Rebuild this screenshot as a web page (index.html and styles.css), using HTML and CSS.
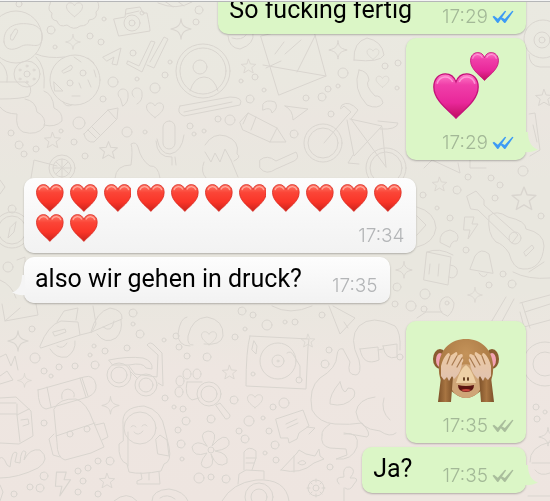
FILE: index.html
```
<!DOCTYPE html>
<html lang="de">
<head>
    <meta charset="UTF-8">
    <meta name="viewport" content="width=device-width, initial-scale=1.0">
    <title>Chat</title>
    <link rel="stylesheet" href="styles.css">
</head>
<body>

    <!-- Shared shapes -->
    <svg class="defs" aria-hidden="true">
        <defs>
            <linearGradient id="red" x1="0" y1="0" x2="0" y2="1">
                <stop offset="0" stop-color="#ff7a6a"/>
                <stop offset="0.3" stop-color="#fb4537"/>
                <stop offset="0.65" stop-color="#fa3528"/>
                <stop offset="1" stop-color="#c9231c"/>
            </linearGradient>
            <linearGradient id="pink" x1="0" y1="0" x2="0" y2="1">
                <stop offset="0" stop-color="#ff7cc8"/>
                <stop offset="0.25" stop-color="#f03fa9"/>
                <stop offset="0.65" stop-color="#e9279a"/>
                <stop offset="1" stop-color="#c00f60"/>
            </linearGradient>
            <radialGradient id="fur" cx="0.5" cy="0.25" r="0.75">
                <stop offset="0" stop-color="#c4935a"/>
                <stop offset="0.6" stop-color="#ad7c46"/>
                <stop offset="1" stop-color="#8a5c30"/>
            </radialGradient>
            <linearGradient id="arm" x1="0" y1="0" x2="1" y2="0">
                <stop offset="0" stop-color="#7d5129"/>
                <stop offset="0.5" stop-color="#a87542"/>
                <stop offset="1" stop-color="#7d5129"/>
            </linearGradient>
            <linearGradient id="hand" x1="0" y1="0" x2="0" y2="1">
                <stop offset="0" stop-color="#ecc9a2"/>
                <stop offset="1" stop-color="#e0c2b0"/>
            </linearGradient>
            <symbol id="heart" viewBox="0 0 28 28">
                <path d="M14 27.5C11.500 24 0.500 17.500 0.500 8.500C0.500 3.500 3.800 0.500 7.500 0.500C10.800 0.500 13 2.600 14 5.400C15 2.600 17.200 0.500 20.500 0.500C24.200 0.500 27.500 3.500 27.500 8.500C27.500 17.500 16.500 24 14 27.500Z" fill="url(#red)" stroke="#d8281f" stroke-width="0.8"/>
                <path d="M3 6C4 2 10 0.800 12 5.500M16 5.500C18 0.800 24 2 25 6" fill="none" stroke="#ffb5a8" stroke-width="1.200" opacity="0.8"/>
            </symbol>
            <symbol id="pink-heart" viewBox="0 0 28 28">
                <path d="M14 27.500C11.500 24 0.500 17.500 0.500 8.500C0.500 3.500 3.800 0.500 7.500 0.500C10.800 0.500 13 2.600 14 5.400C15 2.600 17.200 0.500 20.500 0.500C24.200 0.500 27.500 3.500 27.500 8.500C27.500 17.500 16.500 24 14 27.500Z" fill="url(#pink)" stroke="#c41279" stroke-width="0.8"/>
                <path d="M2.500 6.500C4 1.500 10 1 12 5.500M16 5.500C18 1 24 1.500 25.500 6.500" fill="none" stroke="#ffb0e0" stroke-width="1" opacity="0.7"/>
            </symbol>
            <symbol id="ticks" viewBox="0 0 22 14">
                <path d="M0.500 6.800L2 5.800L5.800 8.700L13 0.800L14.200 1.300L6.500 12.800L5.300 12.900Z"/>
                <path d="M8.500 8.800L10 7.600L12.800 8.900L20.300 0.800L21.500 1.300L13.500 12.800L12.300 12.900Z"/>
            </symbol>
            <symbol id="tail" viewBox="0 0 14 26">
                <path d="M0 0H3C3 9 6 15 13 17.500C9 19.500 4 20.500 0 20Z"/>
            </symbol>
            <symbol id="star" viewBox="0 0 20 20">
                <path d="M10 1.500L12.200 7L18.500 7.500L13.800 11.300L15.500 17.500L10 14.200L4.500 17.500L6.200 11.300L1.500 7.500L7.800 7Z"/>
            </symbol>
            <symbol id="spark" viewBox="0 0 20 20">
                <path d="M10 0.800C10.500 6 12 8.500 19.200 10C12 11.500 10.500 14 10 19.200C9.500 14 8 11.500 0.800 10C8 8.500 9.500 6 10 0.800Z"/>
            </symbol>
            <symbol id="love" viewBox="0 0 20 18">
                <path d="M10 16.500C6 13.500 1.500 10 1.500 6C1.500 1 8 0.500 10 5C12 0.500 18.500 1 18.500 6C18.500 10 14 13.500 10 16.500Z"/>
            </symbol>
            <symbol id="bolt" viewBox="0 0 16 24">
                <path d="M2 1H11L9 8H15L5 23L7 14H1Z"/>
            </symbol>
        </defs>
    </svg>

    <!-- Doodle wallpaper -->
    <svg class="wallpaper" viewBox="0 0 550 501" preserveAspectRatio="xMidYMid slice" aria-hidden="true">
        <!-- bubbles -->
        <g>
            <circle cx="19" cy="4" r="3"/><circle cx="51" cy="30" r="4"/><circle cx="90" cy="36" r="3"/><circle cx="101" cy="42" r="3"/>
            <circle cx="55" cy="47" r="2"/><circle cx="113" cy="82" r="5"/><circle cx="133" cy="53" r="3"/><circle cx="137" cy="79" r="2"/>
            <circle cx="155" cy="88" r="5"/><circle cx="165" cy="75" r="3"/><circle cx="103" cy="99" r="3"/><circle cx="79" cy="123" r="6"/>
            <circle cx="127" cy="132" r="5"/><circle cx="145" cy="132" r="2"/><circle cx="190" cy="126" r="3"/><circle cx="194" cy="134" r="2"/>
            <circle cx="204" cy="131" r="2"/><circle cx="74" cy="142" r="3"/><circle cx="85" cy="156" r="3"/><circle cx="19" cy="145" r="4"/>
            <circle cx="24" cy="154" r="3"/><circle cx="36" cy="149" r="3"/><circle cx="11" cy="133" r="3"/><circle cx="61" cy="131" r="2"/>
            <circle cx="199" cy="10" r="4"/><circle cx="196" cy="22" r="3"/><circle cx="104" cy="19" r="2"/><circle cx="170" cy="62" r="2"/>
            <circle cx="241" cy="81" r="2"/><circle cx="255" cy="77" r="3"/><circle cx="250" cy="99" r="4"/><circle cx="264" cy="90" r="2"/>
            <circle cx="343" cy="73" r="5"/><circle cx="328" cy="89" r="3"/><circle cx="306" cy="98" r="3"/><circle cx="322" cy="97" r="4"/>
            <circle cx="338" cy="86" r="2"/><circle cx="385" cy="66" r="3"/><circle cx="398" cy="63" r="3"/><circle cx="397" cy="88" r="2"/>
            <circle cx="331" cy="114" r="3"/><circle cx="230" cy="120" r="5"/><circle cx="218" cy="119" r="3"/><circle cx="294" cy="134" r="4"/>
            <circle cx="523" cy="171" r="5"/><circle cx="491" cy="178" r="3"/><circle cx="500" cy="185" r="3"/><circle cx="468" cy="177" r="3"/>
            <circle cx="457" cy="190" r="4"/><circle cx="423" cy="195" r="3"/><circle cx="437" cy="208" r="2"/><circle cx="495" cy="198" r="3"/>
            <circle cx="541" cy="216" r="3"/><circle cx="450" cy="218" r="3"/><circle cx="466" cy="250" r="3"/><circle cx="503" cy="274" r="3"/>
            <circle cx="489" cy="285" r="3"/><circle cx="512" cy="284" r="4"/><circle cx="425" cy="294" r="5"/><circle cx="397" cy="287" r="4"/>
            <circle cx="395" cy="304" r="3"/><circle cx="411" cy="306" r="5"/><circle cx="424" cy="309" r="3"/><circle cx="32" cy="329" r="3"/>
            <circle cx="35" cy="358" r="5"/><circle cx="44" cy="371" r="3"/><circle cx="51" cy="376" r="2"/><circle cx="59" cy="367" r="3"/>
            <circle cx="75" cy="366" r="3"/><circle cx="90" cy="355" r="2"/><circle cx="105" cy="351" r="3"/><circle cx="94" cy="346" r="2"/>
            <circle cx="95" cy="365" r="4"/><circle cx="127" cy="348" r="3"/><circle cx="133" cy="313" r="4"/><circle cx="140" cy="334" r="4"/>
            <circle cx="133" cy="324" r="2"/><circle cx="164" cy="340" r="2"/><circle cx="176" cy="336" r="3"/><circle cx="179" cy="347" r="3"/>
            <circle cx="187" cy="356" r="3"/><circle cx="165" cy="398" r="3"/><circle cx="174" cy="407" r="2"/><circle cx="183" cy="409" r="3"/>
            <circle cx="186" cy="421" r="4"/><circle cx="178" cy="430" r="3"/><circle cx="181" cy="444" r="4"/><circle cx="182" cy="459" r="2"/>
            <circle cx="44" cy="423" r="3"/><circle cx="98" cy="461" r="3"/><circle cx="110" cy="461" r="4"/><circle cx="88" cy="468" r="3"/>
            <circle cx="78" cy="471" r="3"/><circle cx="83" cy="481" r="3"/><circle cx="98" cy="494" r="3"/><circle cx="78" cy="492" r="3"/>
            <circle cx="44" cy="476" r="4"/><circle cx="30" cy="487" r="3"/><circle cx="40" cy="488" r="4"/><circle cx="14" cy="494" r="3"/>
            <circle cx="242" cy="311" r="4"/><circle cx="253" cy="315" r="3"/><circle cx="267" cy="325" r="5"/><circle cx="285" cy="322" r="2"/>
            <circle cx="295" cy="322" r="3"/><circle cx="245" cy="329" r="2"/><circle cx="235" cy="337" r="3"/><circle cx="207" cy="357" r="4"/>
            <circle cx="322" cy="315" r="3"/><circle cx="325" cy="364" r="4"/><circle cx="329" cy="350" r="3"/><circle cx="284" cy="403" r="5"/>
            <circle cx="273" cy="407" r="3"/><circle cx="234" cy="400" r="4"/><circle cx="249" cy="421" r="5"/><circle cx="263" cy="418" r="2"/>
            <circle cx="239" cy="431" r="3"/><circle cx="245" cy="439" r="4"/><circle cx="269" cy="431" r="3"/><circle cx="275" cy="445" r="4"/>
            <circle cx="265" cy="453" r="2"/><circle cx="276" cy="460" r="3"/><circle cx="330" cy="467" r="3"/><circle cx="199" cy="478" r="5"/>
            <circle cx="211" cy="477" r="3"/><circle cx="226" cy="479" r="4"/><circle cx="211" cy="419" r="4"/><circle cx="536" cy="407" r="3"/>
            <circle cx="545" cy="412" r="2"/><circle cx="537" cy="419" r="3"/><circle cx="8" cy="267" r="5"/><circle cx="400" cy="357" r="3"/>
        </g>

        <!-- small shapes -->
        <g>
            <use href="#spark" x="65" y="34" width="16" height="16"/>
            <use href="#spark" x="170" y="18" width="22" height="22"/>
            <use href="#spark" x="328" y="40" width="20" height="20"/>
            <use href="#spark" x="395" y="261" width="18" height="18"/>
            <use href="#spark" x="467" y="287" width="16" height="16"/>
            <use href="#spark" x="7" y="330" width="22" height="22"/>
            <use href="#spark" x="17" y="373" width="15" height="15"/>
            <use href="#spark" x="101" y="396" width="19" height="19"/>
            <use href="#spark" x="538" y="427" width="20" height="20"/>
            <use href="#star" x="43" y="131" width="19" height="19"/>
            <use href="#star" x="98" y="140" width="21" height="21"/>
            <use href="#star" x="240" y="58" width="17" height="17"/>
            <use href="#star" x="431" y="176" width="17" height="17"/>
            <use href="#star" x="510" y="185" width="28" height="28"/>
            <use href="#star" x="534" y="88" width="20" height="20"/>
            <use href="#star" x="221" y="364" width="17" height="17"/>
            <use href="#star" x="300" y="333" width="16" height="16"/>
            <use href="#star" x="98" y="472" width="18" height="18"/>
            <use href="#love" x="145" y="101" width="20" height="18"/>
            <use href="#love" x="65" y="1" width="19" height="17"/>
            <use href="#love" x="366" y="47" width="14" height="14"/>
            <use href="#love" x="375" y="74" width="15" height="15"/>
            <use href="#love" x="246" y="393" width="18" height="16"/>
            <use href="#love" x="200" y="330" width="18" height="16"/>
            <use href="#bolt" x="462" y="216" width="18" height="24"/>
            <use href="#bolt" x="54" y="471" width="18" height="26"/>
        </g>

        <!-- astronaut helmet, cookies, cloud -->
        <circle cx="16" cy="37" r="26"/>
        <path d="M4 42C3 28 14 22 29 24C40 25 44 33 42 40C39 51 29 41 20 47C12 51 5 50 4 42ZM11 35L15 29Q19 29 17 33L13 40Q9 41 11 35Z"/>
        <circle cx="27" cy="74" r="13"/><circle cx="27" cy="74" r="3"/>
        <circle cx="27" cy="66" r="1"/><circle cx="34" cy="70" r="1"/><circle cx="34" cy="79" r="1"/><circle cx="27" cy="82" r="1"/><circle cx="20" cy="79" r="1"/><circle cx="20" cy="70" r="1"/>
        <path d="M36 54Q47 59 65 57M36 57Q46 66 44 88M0 62Q9 70 7 82M0 82H25Q34 87 29 96Q22 99 0 99"/>
        <path d="M25 99Q36 101 37 112Q47 117 44 127Q37 136 23 132Q15 128 17 114Q5 114 0 107M44 91Q53 94 54 108Q63 112 62 121Q55 128 44 125"/>
        <path d="M50 4Q47 10 52 13Q50 20 57 21Q59 28 67 25Q74 31 80 26Q88 26 89 20Q98 19 96 12Q101 8 97 0M50 4L51 0"/>
        <circle cx="75" cy="80" r="25"/><circle cx="70" cy="83" r="3"/><circle cx="83" cy="73" r="3"/>
        <path d="M62 71L71 65Q74 67 71 70L64 73ZM54 82L63 91H55ZM79 83L81 88M88 80L91 87M72 96H80M74 57L81 62M88 58L94 63M94 70L96 77M63 102Q66 108 72 105"/>

        <!-- camera, plane, ticks, profile -->
        <path d="M114 19L125 17L126 9L140 7L143 13L147 13Q150 27 150 31L119 36ZM126 14L139 11"/>
        <circle cx="132" cy="23" r="8"/><circle cx="132" cy="23" r="3"/><circle cx="142" cy="13" r="2"/>
        <path d="M103 57L121 48L117 65L112 64L114 57L107 61Z"/>
        <path d="M128 61L139 66L151 41L155 42L142 72L127 64ZM150 62L164 37L168 39L154 68L147 65"/>
        <circle cx="203" cy="71" r="27"/><circle cx="203" cy="71" r="23"/><circle cx="200" cy="67" r="7"/><path d="M190 91Q194 77 204 77Q214 77 218 91"/>
        <path d="M158 3Q177 11 192 2M163 0L173 7M176 0L184 6M120 98a5 5 0 1 1 8 -4Q129 102 123 106ZM134 97a5 5 0 1 1 8 -4Q143 101 137 104"/>

        <!-- crayon, mic, thumb, citrus, bracelet -->
        <path d="M84 134L108 110L118 108L117 119L94 142Q86 143 84 134ZM108 110L116 119M92 127L100 135M88 130L96 138"/>
        <rect x="163" y="121" width="12" height="28" rx="6"/><path d="M157 139Q160 154 170 154Q182 152 184 135M156 141Q157 158 172 157V165M175 157L176 165"/>
        <path d="M115 178Q116 165 131 165Q133 150 131 144Q136 141 138 147Q141 160 150 166Q158 165 160 178M31 178L34 160L57 166"/>
        <circle cx="62" cy="168" r="13"/><circle cx="62" cy="168" r="9"/><path d="M62 159V177M53 168H71M56 162L69 174M56 174L68 162"/>
        <path d="M180 106L230 97Q244 97 240 105L184 116Q176 113 180 106ZM184 112L232 102"/>

        <!-- envelope, phone, faces -->
        <path d="M261 36L312 24L326 76L279 95ZM263 65L297 71L326 76M275 54L284 42M285 54L301 40M297 72L315 36M266 68L281 61"/>
        <path d="M228 36Q229 48 240 49Q255 44 253 33M232 38Q242 41 246 35"/>
        <path d="M354 60Q353 42 367 38Q382 41 384 55Q380 63 354 60ZM359 70Q352 89 367 105Q378 110 383 103Q381 95 375 96Q364 85 369 80Q368 71 359 70Z"/>
        <path d="M263 104Q266 99 275 102Q279 108 272 113Q271 106 263 110ZM285 106L308 109L293 120Q293 110 285 106Z"/>

        <!-- bicycle, pencil, monkey, tools -->
        <circle cx="323" cy="143" r="19"/><circle cx="323" cy="143" r="15"/><circle cx="386" cy="168" r="20"/><circle cx="386" cy="168" r="16"/>
        <path d="M324 143L347 116L351 112L344 106Q338 112 342 105Q349 100 358 110L351 119L386 167M350 119L382 126L354 156L347 120M378 121L398 123Q397 130 380 129M353 155L348 163L359 164M382 127L386 167"/>
        <path d="M240 122L248 113L277 128L286 142L270 142L243 130ZM248 113L243 124M256 117L251 130M277 128L270 142"/>
        <path d="M205 145Q213 132 226 136Q240 141 237 154Q242 157 234 161M205 152L211 162L215 153L220 162L225 149L231 160M204 162Q200 172 206 178M231 160L238 177M260 160Q267 154 276 161L296 152Q300 158 294 161L276 169Q266 176 260 168Z"/>

        <!-- right edge -->
        <circle cx="543" cy="39" r="19"/><circle cx="542" cy="40" r="8"/><circle cx="542" cy="40" r="3"/>
        <path d="M529 54Q529 66 540 67H550M529 114L535 113L540 150L530 156M424 168L432 160L460 173L458 163M470 160V168H486M533 125L537 142"/>

        <!-- cup, bell, guitar, pin -->
        <path d="M427 252L451 257L448 285L424 280ZM427 252Q439 247 453 255M450 265Q459 266 457 274Q454 280 449 277M430 264L429 274M439 264L438 276"/>
        <path d="M470 269L475 256Q481 247 489 254L493 273ZM479 273Q484 280 487 274M440 242Q439 232 450 230Q461 233 457 241Q452 240 450 247Z"/>
        <path d="M467 196L476 191L484 200L484 205L518 235L512 243L478 210L471 209ZM489 216Q496 209 508 217Q526 221 526 229Q544 233 544 246Q542 270 523 269Q513 269 509 253Q503 244 496 242Q487 234 489 216ZM524 252L532 245L534 248L526 256ZM513 272Q528 280 550 278M544 262L529 272"/>
        <circle cx="515" cy="238" r="6"/>
        <path d="M442 313Q437 306 442 299Q449 293 454 303Q454 311 448 316ZM490 324L506 297M500 325L514 299M520 303L550 295M525 312L550 304M522 303L530 328"/>
        <circle cx="447" cy="303" r="2"/>
        <path d="M417 207Q435 212 436 228Q434 243 417 247M417 216L426 225L417 235M386 180H404"/>

        <!-- left edge -->
        <circle cx="12" cy="230" r="18"/><circle cx="12" cy="230" r="14"/><circle cx="12" cy="209" r="4"/><path d="M16 222L14 232L8 238L10 228ZM0 180L5 187L0 194M17 260L25 257V270M0 280Q12 285 16 298"/>
        <path d="M2 304L5 321L38 315L36 304M5 321L20 308M0 357L6 354L11 366L15 356L18 370M0 376L7 371L13 380L0 384"/>

        <!-- race car, scooter, backpack, milk, bread -->
        <path d="M40 346Q48 325 61 321L78 322L80 335L41 348ZM57 322L64 311L78 308L76 320M91 332Q96 312 110 308Q123 310 122 319L110 324ZM80 335L92 332L96 324L93 306M53 332L65 329L66 332L55 336Z"/>
        <path d="M50 349Q56 359 67 357Q76 351 75 341M57 346Q63 350 67 343M97 334Q105 345 116 338Q123 331 121 320M103 327Q112 334 114 321"/>
        <circle cx="119" cy="375" r="12"/><circle cx="119" cy="375" r="8"/><circle cx="146" cy="385" r="11"/><circle cx="146" cy="385" r="7"/>
        <path d="M109 360Q128 356 143 358Q153 361 152 369L146 368Q143 362 129 365L113 365ZM129 366L135 374L157 377L158 355L147 345Q150 341 154 345L162 353L163 386L158 383M131 372L137 378"/>
        <path d="M38 390L84 377Q94 374 96 385Q97 393 88 397L46 409Q38 408 38 390ZM47 387L51 407M80 378L86 397M62 399Q60 390 68 389Q76 391 74 397M82 378L88 396"/>
        <path d="M54 409Q59 398 76 399Q87 403 93 421L104 447L91 453L65 460Q57 458 57 443ZM56 436L95 423M54 434L49 439L53 455L60 457M95 425L104 423L108 437L102 440"/>
        <circle cx="70" cy="434" r="3"/><circle cx="87" cy="429" r="3"/>
        <path d="M0 398L16 397L31 411L33 436L19 444L0 443M17 404V415L20 442M17 415L29 409M0 414H17M0 403H16M21 420L28 419L29 424L23 426"/>
        <path d="M0 458Q3 455 7 465L10 467Q12 448 17 453L15 462L20 463Q21 447 26 452L24 460Q30 448 40 450Q51 459 38 468Q18 478 0 478"/>

        <!-- little astronaut, paw, magnifier, flower -->
        <path d="M123 424Q121 407 144 406Q162 410 165 430L169 447Q172 462 164 464L161 471Q141 475 129 472L127 464Q118 461 119 444L123 441ZM128 432L128 466M156 439L160 435L167 440L169 456L158 454ZM141 473L142 479L137 481V484H160L159 472M149 473V480"/>
        <circle cx="140" cy="428" r="16"/><path d="M131 427Q133 424 136 427M142 426Q145 423 147 426M134 432Q138 437 143 431"/>
        <circle cx="209" cy="394" r="12"/><circle cx="209" cy="394" r="8"/><path d="M216 405L220 403L230 415Q230 419 226 419ZM187 382H202M187 382Q184 396 192 400L199 398"/>
        <ellipse cx="180" cy="381" rx="4" ry="5"/><ellipse cx="187" cy="374" rx="4" ry="5"/><ellipse cx="197" cy="374" rx="4" ry="5"/><ellipse cx="179" cy="392" rx="4" ry="5"/>
        <path d="M207 446Q197 433 208 431Q219 431 212 446Q225 431 229 441Q231 449 215 451Q229 453 227 463Q217 470 211 454Q216 467 206 468Q196 466 207 453Q193 458 192 447Q196 439 207 446Z"/><circle cx="211" cy="450" r="3"/>
        <path d="M193 345Q187 346 188 336Q192 318 207 317Q224 320 223 336Q221 346 204 344M187 317Q180 318 178 334Q178 346 190 346"/>

        <!-- record player, note, fish, ship -->
        <path d="M250 336L309 339L308 347L306 389L246 386Q246 350 250 336Z"/>
        <circle cx="278" cy="361" r="18"/><circle cx="278" cy="361" r="6"/><circle cx="278" cy="361" r="1"/><circle cx="253" cy="374" r="2"/><circle cx="299" cy="380" r="3"/>
        <path d="M287 353Q291 350 294 356L300 366V378M254 341L257 346L256 354L252 350Z"/>
        <path d="M276 419L303 410L309 426L299 433L297 439L289 443L288 438L281 438ZM286 424L297 419M287 428L298 423M307 427L315 428L309 434"/>
        <path d="M281 470L297 453L299 450L306 454L315 456L319 449L320 456L324 459L314 463Q301 475 281 470ZM294 456L294 472M298 463Q303 458 306 463Q302 467 298 463"/>
        <path d="M222 501Q232 483 256 480Q286 478 289 501M238 484L239 474L246 470L264 471V479M244 470V452Q249 445 256 451V458L252 470M246 458H256M246 463H254"/>
        <circle cx="259" cy="497" r="14"/><circle cx="259" cy="497" r="8"/>
        <circle cx="316" cy="488" r="8"/><circle cx="316" cy="488" r="3"/><path d="M316 479V482M325 488H322M316 497V494M307 488H310M310 482L312 484M322 482L320 484M322 494L320 492M310 494L312 492"/>
        <path d="M272 306Q290 316 312 306M329 306L340 334L355 318L333 306M344 322L348 328"/>

        <!-- octopus, glasses, plants -->
        <path d="M343 349Q338 347 337 355Q337 368 320 378Q308 388 312 410Q319 423 335 424Q350 425 362 423Q372 434 367 437L344 433M343 349L350 362Q346 375 356 375Q362 374 359 360Q348 338 359 326Q372 314 395 326Q401 332 400 350M340 382Q329 395 330 404Q345 408 354 397Q357 388 348 388Q344 398 340 382Z"/>
        <path d="M322 435Q320 446 330 448L346 449L347 455L336 459Q352 461 357 447Q360 431 344 434M330 424Q321 430 322 435M375 397Q358 399 356 412Q358 429 380 431Q390 438 396 433M384 398Q380 411 390 420"/>
        <path d="M360 349L378 347L379 360Q363 367 360 349ZM383 346L397 344L397 357Q385 361 383 346ZM378 350L383 349M339 484Q333 477 344 477Q342 466 350 467Q357 470 350 478Q361 477 354 484Q350 492 345 488M344 488V501"/>
        <path d="M114 501Q127 490 137 501M152 501Q152 490 169 489Q184 491 188 501M160 498Q167 493 175 499M0 485L3 492L0 501"/>
        <circle cx="545" cy="364" r="22"/><circle cx="545" cy="364" r="12"/>
        <path d="M520 312L524 327L550 320M530 462Q529 447 550 442M532 463H550M535 470Q540 477 550 473M417 318L426 312L442 312M528 496H550"/>
    </svg>

    <main class="chat">
        <div class="message out">
            <p class="text">So fucking fertig</p>
            <span class="meta read">
                <time>17:29</time>
                <svg class="ticks" role="img" aria-label="Gelesen"><use href="#ticks"/></svg>
            </span>
        </div>

        <div class="message out emoji">
            <svg class="big" viewBox="0 0 68 68" role="img" aria-label="Zwei Herzen">
                <use href="#pink-heart" x="1" y="22" width="46" height="46"/>
                <use href="#pink-heart" x="38" y="1" width="29" height="29"/>
            </svg>
            <span class="meta read">
                <time>17:29</time>
                <svg class="ticks" role="img" aria-label="Gelesen"><use href="#ticks"/></svg>
            </span>
            <svg class="tail" aria-hidden="true"><use href="#tail"/></svg>
        </div>

        <div class="message in hearts group">
            <div class="heart-grid" role="img" aria-label="13 rote Herzen">
                <svg><use href="#heart"/></svg>
                <svg><use href="#heart"/></svg>
                <svg><use href="#heart"/></svg>
                <svg><use href="#heart"/></svg>
                <svg><use href="#heart"/></svg>
                <svg><use href="#heart"/></svg>
                <svg><use href="#heart"/></svg>
                <svg><use href="#heart"/></svg>
                <svg><use href="#heart"/></svg>
                <svg><use href="#heart"/></svg>
                <svg><use href="#heart"/></svg>
                <svg><use href="#heart"/></svg>
                <svg><use href="#heart"/></svg>
            </div>
            <span class="meta"><time>17:34</time></span>
        </div>

        <div class="message in">
            <p class="text">also wir gehen in druck?</p>
            <span class="meta"><time>17:35</time></span>
            <svg class="tail" aria-hidden="true"><use href="#tail"/></svg>
        </div>

        <div class="message out emoji group">
            <svg class="big" viewBox="0 0 68 68" role="img" aria-label="Affe hält sich die Augen zu">
                <ellipse cx="8" cy="25" rx="7" ry="10" fill="#8a5c30"/>
                <ellipse cx="60" cy="25" rx="7" ry="10" fill="#8a5c30"/>
                <ellipse cx="8" cy="26" rx="4" ry="7" fill="#f3a3b4"/>
                <ellipse cx="60" cy="26" rx="4" ry="7" fill="#f3a3b4"/>
                <path d="M34 5C49 5 60 15 61 31C62 44 58 51 50 56C44 61 39 64 34 64C29 64 24 61 18 56C10 51 6 44 7 31C8 15 19 5 34 5Z" fill="url(#fur)"/>
                <path d="M34 30C42 30 46 39 50 47C51 56 43 64 34 64C25 64 17 56 18 47C22 39 26 30 34 30Z" fill="#cfa577"/>
                <path d="M34 31C39 34 42 43 44 49H24C26 43 29 34 34 31Z" fill="#edd0a5"/>
                <path d="M26 51Q34 53 42 51Q42 58 34 58Q26 58 26 51Z" fill="#5b1411"/>
                <path d="M29 56Q34 54 39 56Q34 59 29 56Z" fill="#c9473e"/>
                <ellipse cx="32" cy="45" rx="1" ry="2" fill="#5a3517"/>
                <ellipse cx="36" cy="45" rx="1" ry="2" fill="#5a3517"/>
                <path d="M9 43Q16 47 21 42L19 68H6Z" fill="url(#arm)"/>
                <path d="M59 43Q52 47 47 42L49 68H62Z" fill="url(#arm)"/>
                <path d="M9 42L9 32Q11 24 15 20Q18 17 18 22L24 18Q26 18 25 22L29 20Q32 20 30 24L31 25Q32 26 30 29Q29 38 24 43L22 45L20 42L17 47L15 43L12 46Z" fill="url(#hand)"/>
                <path d="M59 42L59 32Q57 24 53 20Q50 17 50 22L44 18Q42 18 43 22L39 20Q36 20 38 24L37 25Q36 26 38 29Q39 38 44 43L46 45L48 42L51 47L53 43L56 46Z" fill="url(#hand)"/>
                <path d="M18 22L15 30M25 22L20 31M30 24L25 33M50 22L53 30M43 22L48 31M38 24L43 33" stroke="#a87a50" stroke-width="1.200" fill="none" stroke-linecap="round"/>
            </svg>
            <span class="meta">
                <time>17:35</time>
                <svg class="ticks" role="img" aria-label="Zugestellt"><use href="#ticks"/></svg>
            </span>
        </div>

        <div class="message out">
            <p class="text">Ja?</p>
            <span class="meta">
                <time>17:35</time>
                <svg class="ticks" role="img" aria-label="Zugestellt"><use href="#ticks"/></svg>
            </span>
            <svg class="tail" aria-hidden="true"><use href="#tail"/></svg>
        </div>
    </main>

    <div class="topline"></div>

</body>
</html>
```
FILE: styles.css
```
* {
    margin: 0;
    padding: 0;
    box-sizing: border-box;
}

body {
    font-family: Roboto, "Liberation Sans", sans-serif;
    background: linear-gradient(#eae9e1 0%, #eae8e0 16%, #ebe6e0 24%, #e9e7df 36%, #e9e7df 58%, #eee6e1 74%, #eee5e0 100%);
    color: #000;
    overflow: hidden;
}

.defs {
    position: absolute;
    width: 0;
    height: 0;
}

/* Wallpaper */
.wallpaper {
    position: fixed;
    top: 0;
    left: 0;
    width: 100%;
    height: 100%;
    z-index: -1;
    fill: none;
    stroke: #d9d5cf;
    stroke-width: 1;
    stroke-linejoin: round;
    stroke-linecap: round;
}

/* Edge of the header */
.topline {
    position: fixed;
    top: 0;
    left: 0;
    width: 100%;
    height: 2px;
    background: #f4f4f4;
    border-bottom: 1px solid #b5b6b8;
}

/* Message list, sticks to the bottom */
.chat {
    height: 100vh;
    display: flex;
    flex-direction: column;
    justify-content: flex-end;
    gap: 4px;
    padding: 0 24px 8px;
    overflow: hidden;
}

.message {
    position: relative;
    display: flex;
    flex-shrink: 0;
    align-items: flex-end;
    min-height: 46px;
    padding: 6px 12px 6px 11px;
    border-radius: 10px;
    box-shadow: 0 1px 2px rgba(0, 0, 0, 0.25);
}

.group {
    margin-top: 14px;
}

.out {
    align-self: flex-end;
    background: #dbf6c6;
    fill: #dbf6c6;
}

.in {
    align-self: flex-start;
    background: linear-gradient(#fdfdfd, #f2f2f2);
    fill: #f5f5f5;
}

.text {
    font-size: 25px;
    line-height: 30px;
    margin-bottom: 3px;
}

.meta {
    display: flex;
    align-items: center;
    gap: 4px;
    height: 22px;
    margin-left: 30px;
    font-family: Inter, "Liberation Sans", sans-serif;
    font-size: 19px;
    font-weight: 300;
    line-height: 22px;
    color: #b3b5b7;
    fill: #a9bd9c;
}

.out .meta {
    color: #a3b897;
}

.out .read {
    fill: #3d9bf5;
}

.ticks {
    width: 22px;
    height: 14px;
}

/* Big emoji */
.emoji {
    flex-direction: column;
    justify-content: space-between;
    width: 120px;
    height: 122px;
    padding-top: 13px;
}

.emoji .meta {
    margin-left: 0;
}

.big {
    align-self: center;
    width: 68px;
    height: 68px;
}

/* Rows of hearts */
.hearts {
    width: 78%;
    height: 75px;
    padding: 6px 14px 6px 12px;
}

.heart-grid {
    display: grid;
    grid-template-columns: repeat(11, 1fr);
    gap: 2px 6px;
    width: 100%;
    align-self: flex-start;
}

.heart-grid svg {
    width: 100%;
    height: 28px;
}

.hearts .meta {
    position: absolute;
    right: 11px;
    bottom: 6px;
}

/* Bubble tails */
.tail {
    position: absolute;
    right: -13px;
    bottom: 2px;
    width: 14px;
    height: 26px;
}

.in .tail {
    right: auto;
    left: -13px;
    transform: scaleX(-1);
}
```
